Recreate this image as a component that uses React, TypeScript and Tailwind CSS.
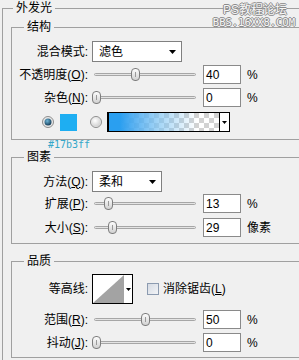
import React from "react";

const font = "font-['Liberation_Sans','Noto_Sans_CJK_SC',sans-serif]";

const Arrow = () => (
  <svg width="7" height="4" viewBox="0 0 7 4" className="shrink-0">
    <polygon points="0,0 7,0 3.5,4" fill="#000" />
  </svg>
);

const Thumb = ({ left }: { left: number }) => (
  <svg width="9" height="13" viewBox="0 0 9 13" className="absolute top-[3px]" style={{ left }}>
    <defs>
      <linearGradient id="tg" x1="0" y1="0" x2="0" y2="1">
        <stop offset="0" stopColor="#ffffff" />
        <stop offset="1" stopColor="#cfcfcf" />
      </linearGradient>
    </defs>
    <rect x="0.5" y="0.5" width="8" height="12" rx="3.5" fill="url(#tg)" stroke="#7d7d7d" />
    <line x1="4.5" y1="4" x2="4.5" y2="9" stroke="#9a9a9a" />
  </svg>
);

// pos = where the thumb sits along the track, 0..1
const Slider = ({ pos }: { pos: number }) => (
  <div className="relative h-[19px] w-[108px] shrink-0">
    <div className="mt-[8px] ml-[2px] h-[3px] w-[102px] rounded-full border border-[#a6a6a6] bg-[#e4e4e4]" />
    <Thumb left={4 + pos * 99 - 4.5} />
  </div>
);

const NumBox = ({ value }: { value: string }) => (
  <div className="ml-[3px] flex h-[19px] w-[38px] shrink-0 items-center border border-[#8a8a8a] bg-white pl-[2px] text-[12px]">
    {value}
  </div>
);

const Label = ({ children }: { children: React.ReactNode }) => (
  <div className="w-[76px] shrink-0 pr-[0px] text-right text-[12px] leading-[14px] text-black">{children}</div>
);

const U = ({ children }: { children: React.ReactNode }) => <span className="underline">{children}</span>;

const SliderRow = ({
  label,
  pos,
  value,
  unit,
  className,
}: {
  label: React.ReactNode;
  pos: number;
  value: string;
  unit: string;
  className: string;
}) => (
  <div className={`flex h-[19px] items-center ${className}`}>
    <Label>{label}</Label>
    <div className="ml-[4px] flex items-center">
      <Slider pos={pos} />
      <NumBox value={value} />
      <span className="ml-[6px] text-[12px]">{unit}</span>
    </div>
  </div>
);

const Group = ({ title, className, children }: { title: string; className: string; children: React.ReactNode }) => (
  <fieldset className={`ml-[8px] border-t border-b border-l border-[#a0a0a0] ${className}`}>
    <legend className="ml-[12px] px-[3px] text-[12px] leading-[16px]">{title}</legend>
    {children}
  </fieldset>
);

const Radio = ({ on }: { on: boolean }) => (
  <svg width="12" height="12" viewBox="0 0 12 12" className="shrink-0">
    <defs>
      <radialGradient id={on ? "ron" : "roff"} cx="0.4" cy="0.35" r="0.7">
        <stop offset="0" stopColor={on ? "#6fb6d8" : "#ffffff"} />
        <stop offset="1" stopColor={on ? "#0f3550" : "#cfcfcf"} />
      </radialGradient>
    </defs>
    <circle cx="6" cy="6" r="5.5" fill="#e8e8e8" stroke="#8d8d8d" />
    <circle cx="6" cy="6" r={on ? 3.5 : 4.5} fill={`url(#${on ? "ron" : "roff"})`} />
  </svg>
);

export default function App() {
  return (
    <div className={`relative h-[360px] w-[299px] overflow-hidden bg-[#f0f0f0] text-black ${font}`}>
      <fieldset className="ml-[2px] border-t border-l border-[#a0a0a0] pb-[20px]">
        <legend className="ml-[10px] px-[3px] text-[12px] leading-[16px]">外发光</legend>

        <Group title="结构" className="mt-[3px] pb-[7px]">
          <div className="mt-[6px] flex h-[21px] items-center">
            <Label>混合模式:</Label>
            <div className="ml-[4px] flex h-[21px] w-[90px] items-center justify-between border border-[#808080] bg-white pr-[5px] pl-[6px] text-[12px]">
              <span>滤色</span>
              <Arrow />
            </div>
          </div>
          <SliderRow className="mt-[3px]" label={<>不透明度(<U>O</U>):</>} pos={0.4} value="40" unit="%" />
          <SliderRow className="mt-[4px]" label={<>杂色(<U>N</U>):</>} pos={0} value="0" unit="%" />
          <div className="mt-[5px] flex h-[20px] items-center pl-[30px]">
            <Radio on />
            <div className="ml-[6px] h-[17px] w-[17px] bg-[#1eaef2]" />
            <div className="ml-[13px]">
              <Radio on={false} />
            </div>
            <div className="ml-[5px] flex h-[20px] w-[123px] border border-l-2 border-black bg-white">
              <div className="h-full w-[110px] bg-[repeating-conic-gradient(#d2d2d2_0_25%,#ffffff_0_50%)] bg-[length:10px_10px]">
                <div className="h-full w-full bg-linear-to-r from-[#2a9ff0] from-10% via-[#7cc3f2]/70 via-45% to-transparent to-80%" />
              </div>
              <div className="flex w-[10px] items-center justify-center border-l border-black">
                <svg width="5" height="3" viewBox="0 0 5 3">
                  <polygon points="0,0 5,0 2.5,3" fill="#000" />
                </svg>
              </div>
            </div>
          </div>
        </Group>

        <div className="h-[9px] pl-[45px] font-['DejaVu_Sans_Mono',monospace] text-[10px] leading-[10px] text-[#35a7c9]">
          #17b3ff
        </div>

        <Group title="图素" className="pb-[6px]">
          <div className="mt-[6px] flex h-[21px] items-center">
            <Label>方法(<U>Q</U>):</Label>
            <div className="ml-[4px] flex h-[21px] w-[70px] items-center justify-between border border-[#808080] bg-white pr-[5px] pl-[6px] text-[12px]">
              <span>柔和</span>
              <Arrow />
            </div>
          </div>
          <SliderRow className="mt-[2px]" label={<>扩展(<U>P</U>):</>} pos={0.13} value="13" unit="%" />
          <SliderRow className="mt-[5px]" label={<>大小(<U>S</U>):</>} pos={0.17} value="29" unit="像素" />
        </Group>

        <Group title="品质" className="mt-[9px] pb-[5px]">
          <div className="mt-[5px] flex h-[30px] items-center">
            <Label>等高线:</Label>
            <div className="ml-[4px] flex h-[30px] w-[41px] border border-black bg-white">
              <svg width="31" height="28" viewBox="0 0 31 28" className="shrink-0">
                <polygon points="0,28 31,0 31,28" fill="#a3a3a3" />
              </svg>
              <div className="flex flex-1 items-center justify-center">
                <svg width="5" height="3" viewBox="0 0 5 3">
                  <polygon points="0,0 5,0 2.5,3" fill="#000" />
                </svg>
              </div>
            </div>
            <div className="ml-[14px] h-[12px] w-[12px] border border-[#8c9bb0] bg-linear-to-br from-[#d6dbe3] to-[#f2f4f7]" />
            <span className="ml-[4px] text-[12px]">
              消除锯齿(<U>L</U>)
            </span>
          </div>
          <SliderRow className="mt-[6px]" label={<>范围(<U>R</U>):</>} pos={0.5} value="50" unit="%" />
          <SliderRow className="mt-[4px]" label={<>抖动(<U>J</U>):</>} pos={0} value="0" unit="%" />
        </Group>
      </fieldset>

      {/* forum watermark */}
      <div className="absolute top-[3px] right-[4px] flex flex-col items-end leading-none text-[#f6f6f6] [text-shadow:1px_0_#8a8a8a,-1px_0_#8a8a8a,0_1px_#8a8a8a,0_-1px_#8a8a8a]">
        <span className="mr-[8px] text-[12px] leading-[14px]">PS教程论坛</span>
        <span className="font-['DejaVu_Sans_Mono',monospace] text-[10.5px] leading-[11px]">BBS.16XX8.COM</span>
      </div>
    </div>
  );
}
